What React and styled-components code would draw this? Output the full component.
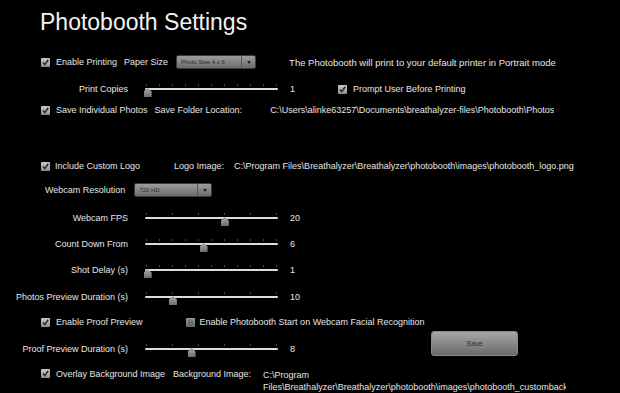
import React from 'react'
import styled, { createGlobalStyle } from 'styled-components'

const text = '#e6e6e6'
const dim = '#4a4a4a'

const GlobalStyle = createGlobalStyle`
    html, body {
        margin: 0;
        padding: 0;
        background: #000;
    }
    body {
        font-family: "Liberation Sans", Arial, sans-serif;
        color: ${text};
        overflow: hidden;
    }
`

const Page = styled.div`
    width: 620px;
    height: 393px;
    background: #000;
    display: flex;
    flex-direction: column;
    overflow: hidden;
`

const Title = styled.h1`
    margin: 0;
    padding: 8px 0 0 40px;
    height: 28px;
    line-height: 28px;
    font-size: 23px;
    font-weight: normal;
    color: #f2f2f2;
`

const Row = styled.div`
    display: flex;
    align-items: ${({ $top }) => ($top ? 'flex-start' : 'center')};
    height: 20px;
    margin-top: ${({ $mt }) => $mt || 0}px;
    padding-left: ${({ $pl }) => ($pl === undefined ? 41 : $pl)}px;
    padding-top: ${({ $top }) => ($top ? 4 : 0)}px;
    box-sizing: border-box;
    font-size: 9px;
    white-space: nowrap;
`

const Text = styled.span`
    margin-left: ${({ $ml }) => $ml || 0}px;
    font-size: ${({ $fs }) => $fs || 9}px;
    color: ${text};
`

const Path = styled.span`
    margin-left: ${({ $ml }) => $ml || 0}px;
    color: ${text};
    line-height: 12px;
    white-space: ${({ $wrap }) => ($wrap ? 'normal' : 'nowrap')};
    width: ${({ $w }) => ($w ? `${$w}px` : 'auto')};
    overflow: hidden;
`

const Label = styled.span`
    width: ${({ $w }) => $w || 128}px;
    text-align: right;
    color: ${text};
    flex-shrink: 0;
`

const Box = styled.span`
    width: 9px;
    height: 9px;
    flex-shrink: 0;
    margin-left: ${({ $ml }) => $ml || 0}px;
    display: inline-flex;
    svg { display: block; }
`

const Check = ({ on = true, ml }) => (
    <Box $ml={ml}>
        <svg width="9" height="9" viewBox="0 0 9 9">
            <defs>
                <linearGradient id={on ? 'cbOn' : 'cbOff'} x1="0" y1="0" x2="0" y2="1">
                    <stop offset="0" stopColor={on ? '#c8c8c8' : '#9a9a9a'} />
                    <stop offset="1" stopColor={on ? '#8e8e8e' : '#6a6a6a'} />
                </linearGradient>
            </defs>
            <rect x="0" y="0" width="9" height="9" rx="1" fill={`url(#${on ? 'cbOn' : 'cbOff'})`} />
            {on ? (
                <path d="M2 4.6 L3.8 6.6 L7.2 1.8" stroke="#2a2a2a" strokeWidth="1.5" fill="none" />
            ) : (
                <path d="M2 2 H7 M2 4.5 H7 M2 7 H7 M3 2 V7 M6 2 V7" stroke="#555" strokeWidth="0.7" />
            )}
        </svg>
    </Box>
)

const Select = styled.div`
    margin-left: ${({ $ml }) => $ml || 0}px;
    width: ${({ $w }) => $w}px;
    height: 14px;
    display: flex;
    align-items: stretch;
    border: 1px solid #3a3a3a;
    border-radius: 2px;
    background: linear-gradient(#9c9c9c, #6c6c6c);
    box-sizing: border-box;
    overflow: hidden;
`

const SelectValue = styled.span`
    flex: 1;
    padding-left: 4px;
    font-size: 6px;
    line-height: 12px;
    color: #2c2c2c;
`

const SelectArrow = styled.span`
    width: 13px;
    border-left: 1px solid #555;
    display: flex;
    align-items: center;
    justify-content: center;
    &::after {
        content: '';
        border-left: 2px solid transparent;
        border-right: 2px solid transparent;
        border-top: 3px solid #222;
    }
`

const Track = styled.div`
    position: relative;
    margin-left: 17px;
    width: 133px;
    height: 20px;
    flex-shrink: 0;
    &::before {
        content: '';
        position: absolute;
        left: 0;
        right: 0;
        top: 9px;
        height: 2px;
        border-radius: 1px;
        background: #dcdcdc;
    }
`

const Ticks = styled.div`
    position: absolute;
    left: 1px;
    right: 1px;
    top: 5px;
    height: 2px;
    display: flex;
    justify-content: space-between;
    span {
        width: 1px;
        height: 2px;
        background: ${dim};
    }
`

const Thumb = styled.div`
    position: absolute;
    top: 9px;
    width: 8px;
    height: 9px;
    margin-left: -4px;
    background: linear-gradient(#a8a8a8, #6e6e6e);
    clip-path: polygon(50% 0, 100% 40%, 100% 100%, 0 100%, 0 40%);
`

const Value = styled.span`
    margin-left: 12px;
    width: 30px;
    flex-shrink: 0;
    color: ${text};
`

const SaveButton = styled.button`
    margin-left: 111px;
    margin-bottom: 11px;
    width: 87px;
    height: 25px;
    border: 1px solid #8a8a8a;
    border-radius: 3px;
    background: linear-gradient(#a6a6a6, #6a6a6a);
    font-family: "Liberation Sans", Arial, sans-serif;
    font-size: 7px;
    color: #2e2e2e;
    padding: 0;
    flex-shrink: 0;
`

const Slider = ({ value, ticks = 11 }) => (
    <Track>
        <Ticks>
            {Array.from({ length: ticks }).map((_, i) => <span key={i} />)}
        </Ticks>
        <Thumb style={{ left: `${value * 100}%` }} />
    </Track>
)

const SliderRow = ({ label, value, pos, ticks, mt, children }) => (
    <Row $pl={0} $mt={mt}>
        <Label>{label}</Label>
        <Slider value={pos} ticks={ticks} />
        <Value>{value}</Value>
        {children}
    </Row>
)

export default function App() {
    return (
        <Page>
            <GlobalStyle />
            <Title>Photobooth Settings</Title>

            <Row $mt={16}>
                <Check />
                <Text $ml={6}>Enable Printing</Text>
                <Text $ml={7}>Paper Size</Text>
                <Select $ml={8} $w={80}>
                    <SelectValue>Photo Size 4 x 6</SelectValue>
                    <SelectArrow />
                </Select>
                <Text $ml={33} $fs={9.5}>The Photobooth will print to your default printer in Portrait mode</Text>
            </Row>

            <SliderRow label="Print Copies" value="1" pos={0.02} ticks={11} mt={7}>
                <Check ml={18} />
                <Text $ml={6}>Prompt User Before Printing</Text>
            </SliderRow>

            <Row $mt={1}>
                <Check />
                <Text $ml={6}>Save Individual Photos</Text>
                <Text $ml={7}>Save Folder Location:</Text>
                <Path $ml={28}>C:\Users\alinke63257\Documents\breathalyzer-files\Photobooth\Photos</Path>
            </Row>

            <Row $mt={36}>
                <Check />
                <Text $ml={5}>Include Custom Logo</Text>
                <Text $ml={34}>Logo Image:</Text>
                <Path $ml={10}>C:\Program Files\Breathalyzer\Breathalyzer\photobooth\images\photobooth_logo.png</Path>
            </Row>

            <Row $mt={4} $pl={45}>
                <Text>Webcam Resolution</Text>
                <Select $ml={9} $w={78}>
                    <SelectValue>720 HD</SelectValue>
                    <SelectArrow />
                </Select>
            </Row>

            <SliderRow label="Webcam FPS" value="20" pos={0.6} ticks={6} mt={8} />
            <SliderRow label="Count Down From" value="6" pos={0.44} ticks={11} mt={6} />
            <SliderRow label="Shot Delay (s)" value="1" pos={0.02} ticks={11} mt={6} />
            <SliderRow label="Photos Preview Duration (s)" value="10" pos={0.21} ticks={6} mt={7} />

            <Row $mt={5}>
                <Check />
                <Text $ml={6}>Enable Proof Preview</Text>
                <Check on={false} ml={43} />
                <Text $ml={5}>Enable Photobooth Start on Webcam Facial Recognition</Text>
            </Row>

            <SliderRow label="Proof Preview Duration (s)" value="8" pos={0.35} ticks={6} mt={7}>
                <SaveButton>Save</SaveButton>
            </SliderRow>

            <Row $mt={6} $top>
                <Check />
                <Text $ml={6}>Overlay Background Image</Text>
                <Text $ml={8}>Background Image:</Text>
                <Path $ml={12} $wrap $w={303}>C:\Program Files\Breathalyzer\Breathalyzer\photobooth\images\photobooth_custombackground.png</Path>
            </Row>
        </Page>
    )
}
